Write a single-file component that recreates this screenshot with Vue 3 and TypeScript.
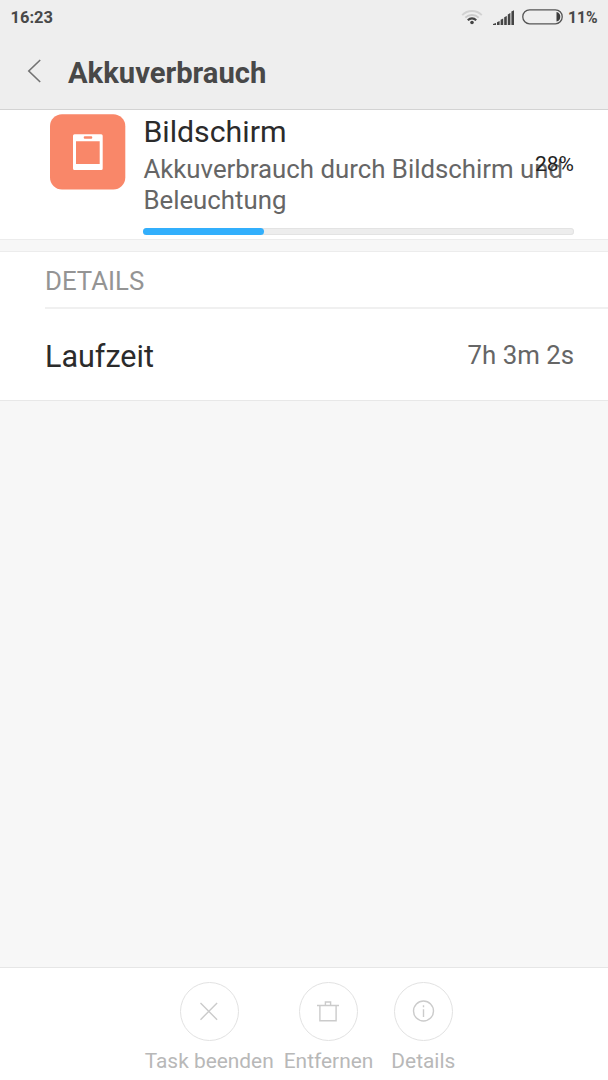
<script setup lang="ts">
interface Action {
  id: 'kill' | 'remove' | 'info'
  label: string
}

const usage = 28
const actions: Action[] = [
  { id: 'kill', label: 'Task beenden' },
  { id: 'remove', label: 'Entfernen' },
  { id: 'info', label: 'Details' },
]
</script>

<template>
  <div class="screen">
    <header class="top">
      <div class="status">
        <span class="clock">16:23</span>
        <svg class="wifi" width="22" height="16" viewBox="0 0 22 16" fill="none">
          <path d="M1.2 6.1C6.5 .6 15.500 .6 20.800 6.1" stroke="#d2d2d2" stroke-width="1.900" />
          <path d="M4.300 8.700C8 5 14 5 17.700 8.700" stroke="#cbcbcb" stroke-width="1.900" />
          <path d="M6.800 11.200C9.200 8.700 12.800 8.700 15.200 11.200" stroke="#444" stroke-width="2.100" />
          <circle cx="11" cy="13.500" r="1.800" fill="#444" />
        </svg>
        <svg class="signal" width="22" height="15" viewBox="0 0 22 15" fill="#444">
          <path d="M0 15v-1l3-1v2zM4 12.200l2.600-1.200v4H4zM7.600 9.700l2.600-1.200V15H7.600zM11.200 7.200L13.800 6v9h-2.600zM14.800 4.400l2.600-1.300V15h-2.600zM18.400 1.600L21 .3V15h-2.600z" />
        </svg>
        <svg class="battery" width="41" height="16" viewBox="0 0 41 16">
          <rect x=".8" y=".8" width="39.400" height="14" rx="6.800" fill="none" stroke="#555" stroke-width="1.300" />
          <path d="M34.500 3C37 3.500 38.300 5.300 38.300 7.800S37 12.100 34.500 12.600z" fill="#3c3c3c" />
        </svg>
        <span class="level">11%</span>
      </div>
      <div class="titlebar">
        <svg class="back" width="15" height="24" viewBox="0 0 15 24" fill="none">
          <path d="M13.200 1L1.800 12l11.400 11" stroke="#737373" stroke-width="1.600" />
        </svg>
        <h1>Akkuverbrauch</h1>
      </div>
    </header>

    <section class="usage">
      <svg class="app-icon" width="76" height="76" viewBox="0 0 76 76">
        <rect x="0" y=".3" width="75.300" height="75.300" rx="12" fill="#f98769" />
        <path fill="#fff" fill-rule="evenodd" d="M24.500 20.300H51.200Q52.700 20.300 52.700 21.800V54.500Q52.700 56 51.200 56H24.500Q23 56 23 54.500V21.800Q23 20.300 24.500 20.300ZM26 27.300V50H49.700V27.300ZM34.800 22.200Q33.700 22.200 33.700 23.500T34.800 24.800H41.200Q42.300 24.800 42.300 23.500T41.200 22.200Z" />
      </svg>
      <div class="usage-body">
        <div class="name">Bildschirm</div>
        <div class="summary">Akkuverbrauch durch Bildschirm und Beleuchtung</div>
        <div class="track"><div class="fill" :style="{ width: usage + '%' }"></div></div>
        <span class="percent">{{ usage }}%</span>
      </div>
    </section>

    <section class="details">
      <h2>DETAILS</h2>
      <div class="row">
        <span class="key">Laufzeit</span>
        <span class="value">7h 3m 2s</span>
      </div>
    </section>

    <footer class="actions">
      <div v-for="a in actions" :key="a.id" class="action">
        <svg width="59" height="59" viewBox="0 0 59 59" fill="none" stroke="#cbcbcb" stroke-width="1.400">
          <circle cx="29.500" cy="29.500" r="29" stroke="#e2e2e2" stroke-width="1" />
          <path v-if="a.id === 'kill'" d="M20.500 21.100l16.600 16.600M37.100 21.100L20.500 37.700" />
          <template v-else-if="a.id === 'remove'">
            <path d="M18 23.500H40M20.900 23.500V38.800H37.100V23.500M26.400 23.500V20H31.600V23.500" />
          </template>
          <template v-else>
            <circle cx="29.500" cy="29" r="10" />
            <path d="M29.500 27.300V35M29.500 23.300V25.200" />
          </template>
        </svg>
        <span>{{ a.label }}</span>
      </div>
    </footer>
  </div>
</template>

<style>
body {
  margin: 0;
  background: #f7f7f7;
}
</style>

<style scoped>
.screen {
  width: 608px;
  height: 1080px;
  display: flex;
  flex-direction: column;
  background: #f7f7f7;
  font-family: Roboto, sans-serif;
  overflow: hidden;
}
.top {
  box-sizing: border-box;
  height: 110px;
  background: #eee;
  border-bottom: 1px solid #d3d3d3;
}
.status {
  display: flex;
  align-items: center;
  height: 34px;
  padding: 0 10.500px;
  font-size: 16px;
  font-weight: 700;
  color: #484848;
}
.clock {
  margin-right: auto;
  font-size: 16.500px;
}
.level {
  font-size: 15.700px;
}
.wifi {
  margin-right: 10px;
}
.signal {
  margin-right: 7px;
}
.battery {
  margin-right: 5px;
}
.titlebar {
  display: flex;
  align-items: center;
  height: 76px;
  padding-left: 27px;
}
.back {
  margin-top: -2px;
}
h1 {
  margin: 2px 0 0 26px;
  font-size: 29.200px;
  line-height: 36px;
  font-weight: 700;
  color: #484848;
}
.usage {
  box-sizing: border-box;
  display: flex;
  height: 130px;
  padding: 4px 34px 0 50px;
  background: #fff;
  border-bottom: 1px solid #ececec;
}
.app-icon {
  flex: none;
}
.usage-body {
  position: relative;
  flex: 1;
  margin-left: 17.400px;
}
.name {
  font-size: 30.300px;
  line-height: 36px;
  color: #2b2b2b;
}
.summary {
  margin-top: 4px;
  font-size: 25.800px;
  line-height: 31px;
  color: #666;
}
.track {
  box-sizing: border-box;
  height: 7px;
  margin-top: 12px;
  border-radius: 3.500px;
  background: #ededed;
  box-shadow: inset 0 0 0 1px #e3e3e3;
}
.fill {
  height: 7px;
  border-radius: 3.500px;
  background: #32affc;
}
.percent {
  position: absolute;
  right: 0;
  top: 37px;
  font-size: 21px;
  line-height: 26px;
  color: #222;
}
.details {
  box-sizing: border-box;
  height: 150px;
  margin-top: 11px;
  background: #fff;
  border-top: 1px solid #ececec;
  border-bottom: 1px solid #e8e8e8;
}
h2 {
  margin: 0 0 0 45px;
  height: 55px;
  line-height: 58px;
  font-size: 25.800px;
  font-weight: 400;
  color: #949494;
  border-bottom: 2px solid #f0f0f0;
}
.row {
  display: flex;
  justify-content: space-between;
  align-items: center;
  height: 91px;
  padding: 0 34px 0 45px;
}
.key {
  padding-top: 5px;
  font-size: 30.500px;
  line-height: 36px;
  color: #2b2b2b;
}
.value {
  font-size: 25.800px;
  line-height: 30px;
  color: #666;
}
.actions {
  box-sizing: border-box;
  display: flex;
  justify-content: center;
  height: 113px;
  margin-top: auto;
  padding-top: 14px;
  gap: 10px;
  background: #fff;
  border-top: 1px solid #e6e6e6;
}
.action {
  display: flex;
  flex-direction: column;
  align-items: center;
  min-width: 80px;
  font-size: 20.900px;
  line-height: 26px;
  color: #b8b8b8;
  white-space: nowrap;
}
.action span {
  margin-top: 7px;
}
</style>
